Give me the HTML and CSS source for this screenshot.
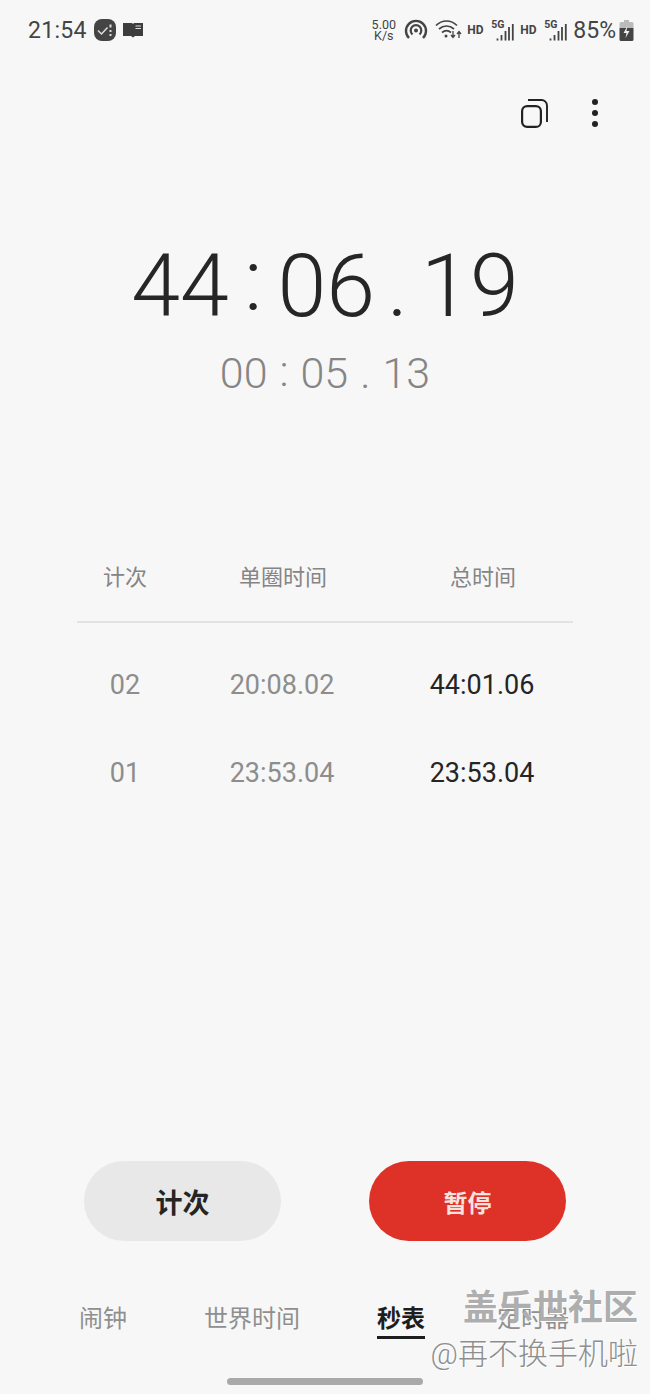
FILE: index.html
```html
<!DOCTYPE html>
<html>
<head>
<meta charset="UTF-8">
<link rel="stylesheet" href="styles.css">
<title>秒表</title>
</head>
<body>
<div class="phone">
    <!-- status bar -->
    <div class="status">
        <div class="status-left">
            <span class="clock">21:54</span>
            <svg class="ic-task" width="24" height="24" viewBox="0 0 24 24">
                <rect x="1" y="1" width="22" height="22" rx="8" fill="#444"/>
                <path d="M5 12.500l3.500 3.500 6-6.500" fill="none" stroke="#ddd" stroke-width="1.500"/>
                <path d="M17.500 6.500v3M17.500 12v2M17.500 16v2" stroke="#ddd" stroke-width="2"/>
            </svg>
            <svg class="ic-book" width="20" height="16" viewBox="0 0 20 16">
                <path d="M0 1h9l1 1 1-1h9v13h-8l-2 1.500L8 14H0z" fill="#3d3d3d"/>
                <path d="M12.500 4h5.500M12.500 6.500h5.500" stroke="#ddd" stroke-width="1"/>
            </svg>
        </div>
        <div class="status-right">
            <span class="speed">5.00<br>K/s</span>
            <svg class="ic-hotspot" width="24" height="22" viewBox="0 0 24 22">
                <path d="M5 19a10 10 0 1 1 14 0" fill="none" stroke="#444" stroke-width="2.400"/>
                <path d="M8.500 15.500a5.300 5.300 0 1 1 7 0" fill="none" stroke="#444" stroke-width="2.200"/>
                <circle cx="12" cy="11.500" r="2" fill="#444"/>
            </svg>
            <svg class="ic-wifi" width="27" height="20" viewBox="0 0 27 20">
                <path d="M1 5.500c6-6 15-6 21 0M4 9c4.500-4 10.500-4 15 0M7 12.500c3-2.500 6-2.500 9 0" fill="none" stroke="#444" stroke-width="1.700"/>
                <circle cx="11" cy="16" r="1.500" fill="#444"/>
                <path d="M18 11v6M16 15l2 2.500 2-2.500M24 18v-6M22 14l2-2.500 2 2.500" fill="none" stroke="#444" stroke-width="1.300"/>
            </svg>
            <span class="hd">HD</span>
            <span class="signal">
                <span class="tag-5g">5G</span>
                <svg width="18" height="18" viewBox="0 0 18 18">
                    <path d="M1.500 15.500v2M5.500 12v5.500M9.500 8v9.500M13 4v13.500M16.800 1v16.500" stroke="#444" stroke-width="1.800"/>
                </svg>
            </span>
            <span class="hd">HD</span>
            <span class="signal">
                <span class="tag-5g">5G</span>
                <svg width="18" height="18" viewBox="0 0 18 18">
                    <path d="M1.500 15.500v2M5.500 12v5.500M9.500 8v9.500M13 4v13.500M16.800 1v16.500" stroke="#444" stroke-width="1.800"/>
                </svg>
            </span>
            <span class="battery-pct">85%</span>
            <svg class="ic-batt" width="15" height="21" viewBox="0 0 14 21">
                <path d="M4.500 0h5v2h3a1.500 1.500 0 0 1 1.500 1.500V8H0V3.500A1.500 1.500 0 0 1 1.500 2h3z" fill="#bbb"/>
                <path d="M0 8h14v11.500a1.500 1.500 0 0 1-1.500 1.500h-11A1.500 1.500 0 0 1 0 19.500z" fill="#444"/>
                <path d="M8 6l-4 7h3l-1 5 4-7H7z" fill="#eee"/>
            </svg>
        </div>
    </div>

    <!-- top actions -->
    <div class="actions">
        <svg class="ic-copy" width="27" height="29" viewBox="0 0 27 29">
            <rect x="1.100" y="7.100" width="18.800" height="20.800" rx="5" fill="none" stroke="#222" stroke-width="2.200"/>
            <path d="M7 1h13.500a5.500 5.500 0 0 1 5.500 5.500V23" fill="none" stroke="#222" stroke-width="1.900"/>
        </svg>
        <div class="more"><i></i><i></i><i></i></div>
    </div>

    <!-- time -->
    <div class="time-main">
        <span>44</span><span class="sep-colon">:</span><span>06</span><span class="sep-dot">.</span><span>19</span>
    </div>
    <div class="time-lap">
        <span>00</span><span class="sep-colon">:</span><span>05</span><span class="sep-dot">.</span><span>13</span>
    </div>

    <!-- lap table -->
    <div class="laps">
        <div class="lap-head">
            <span class="c-no">计次</span>
            <span class="c-lap">单圈时间</span>
            <span class="c-total">总时间</span>
        </div>
        <div class="lap-row">
            <span class="c-no">02</span>
            <span class="c-lap">20:08.02</span>
            <span class="c-total">44:01.06</span>
        </div>
        <div class="lap-row">
            <span class="c-no">01</span>
            <span class="c-lap">23:53.04</span>
            <span class="c-total">23:53.04</span>
        </div>
    </div>

    <!-- buttons -->
    <div class="buttons">
        <button class="btn btn-grey">计次</button>
        <button class="btn btn-red">暂停</button>
    </div>

    <!-- tabs -->
    <div class="tabs">
        <span class="tab t1">闹钟</span>
        <span class="tab t2">世界时间</span>
        <span class="tab t3 active">秒表</span>
        <span class="tab t4">定时器</span>
    </div>
    <div class="home-bar"></div>

    <div class="watermark">
        <div class="wm-big">盖乐世社区</div>
        <div class="wm-small">@再不换手机啦</div>
    </div>
</div>
</body>
</html>
```

FILE: styles.css
```css
* {
    box-sizing: border-box;
}
html, body {
    margin: 0;
    padding: 0;
}
body {
    background: #f7f7f7;
    font-family: Roboto, "Noto Sans CJK SC", sans-serif;
}
.phone {
    position: relative;
    width: 650px;
    height: 1394px;
    overflow: hidden;
    background: #f7f7f7;
}

/* status bar */
.status {
    display: flex;
    justify-content: space-between;
    align-items: center;
    height: 60px;
    padding: 0 16px 0 28px;
    color: #444;
}
.status-left, .status-right {
    display: flex;
    align-items: center;
}
.clock {
    font-size: 23px;
    letter-spacing: 0.3px;
    margin-right: 6px;
}
.ic-book {
    margin-left: 6px;
}
.speed {
    width: 25px;
    font-size: 12.500px;
    line-height: 11px;
    text-align: center;
    margin-right: 8px;
}
.ic-hotspot {
    margin-right: 7px;
}
.hd {
    width: 16px;
    font-size: 12px;
    font-weight: 700;
    margin: 0 8px 0 5px;
}
.signal + .hd {
    margin-left: 6px;
}
.signal {
    position: relative;
    display: block;
    width: 23px;
    height: 20px;
}
.signal svg {
    position: absolute;
    right: 0;
    top: 3px;
}
.tag-5g {
    position: absolute;
    left: 0;
    top: -2px;
    font-size: 10.500px;
    font-weight: 700;
}
.battery-pct {
    font-size: 23px;
    margin: 0 3px 0 6px;
}

/* actions */
.actions {
    display: flex;
    justify-content: flex-end;
    align-items: center;
    height: 38px;
    margin-top: 34px;
    padding-right: 52px;
    gap: 44px;
}
.more {
    display: flex;
    flex-direction: column;
    gap: 5px;
}
.more i {
    display: block;
    width: 6px;
    height: 6px;
    border-radius: 50%;
    background: #222;
}

/* time */
.time-main, .time-lap {
    display: flex;
    justify-content: center;
    font-weight: 300;
}
.time-main {
    margin-top: 102px;
    height: 104px;
    line-height: 104px;
    font-size: 88px;
    color: #262626;
}
.time-main .sep-colon {
    margin: -6px 15px 0;
    line-height: 104px;
}
.time-main .sep-dot {
    margin: 0 13px 0 12px;
}
.time-lap {
    height: 50px;
    line-height: 50px;
    margin-top: 10px;
    font-size: 43px;
    color: #858585;
}
.time-lap .sep-colon {
    margin: -2px 12px 0;
}
.time-lap .sep-dot {
    margin: 0 12px;
}

/* laps */
.laps {
    margin: 159px 77px 0;
}
.lap-head, .lap-row {
    display: grid;
    grid-template-columns: 96px 218px 1fr;
    text-align: center;
}
.lap-head {
    height: 66px;
    padding-bottom: 28px;
    align-items: center;
    border-bottom: 2px solid #e3e3e3;
    font-size: 22px;
    color: #858585;
}
.lap-head .c-lap, .lap-head .c-total {
    padding-left: 2px;
}
.lap-row {
    height: 88px;
    align-items: center;
    font-size: 27px;
    color: #8d8d8d;
}
.lap-head + .lap-row {
    margin-top: 18px;
}
.lap-row .c-total {
    color: #252525;
}

/* buttons */
.buttons {
    position: absolute;
    top: 1161px;
    left: 84px;
    display: flex;
    gap: 88px;
}
.btn {
    width: 197px;
    height: 80px;
    border: 0;
    border-radius: 40px;
    font-family: inherit;
    font-size: 27px;
    font-weight: 700;
}
.btn-grey {
    background: #e8e8e8;
    color: #252525;
}
.btn-red {
    background: #de3128;
    color: #f6e3df;
    font-size: 24px;
}

/* tabs */
.tabs {
    position: absolute;
    top: 1304px;
    left: 0;
    width: 650px;
    height: 36px;
    font-size: 24px;
    color: #8f8f8f;
}
.tab {
    position: absolute;
    top: 0;
    line-height: 31px;
}
.t1 { left: 79px; }
.t2 { left: 204px; }
.t3 { left: 377px; }
.t4 { left: 497px; }
.tab.active {
    color: #1e1e1e;
    font-weight: 700;
    border-bottom: 3px solid #1e1e1e;
    height: 35px;
}
.home-bar {
    position: absolute;
    top: 1378px;
    left: 227px;
    width: 196px;
    height: 7px;
    border-radius: 4px;
    background: #a9a9a9;
}

/* watermark over the tabs */
.watermark {
    position: absolute;
    top: 1289px;
    right: 12px;
    text-align: right;
    color: #8e8e8e;
}
.wm-big {
    font-size: 35px;
    line-height: 40px;
    font-weight: 700;
    color: rgba(160, 160, 160, 0.85);
    text-shadow: 1px 1px 0 #fff;
}
.wm-small {
    font-size: 30px;
    font-weight: 300;
    line-height: 34px;
    margin-top: 8px;
    text-shadow: 1px 1px 0 #fff;
}
```
